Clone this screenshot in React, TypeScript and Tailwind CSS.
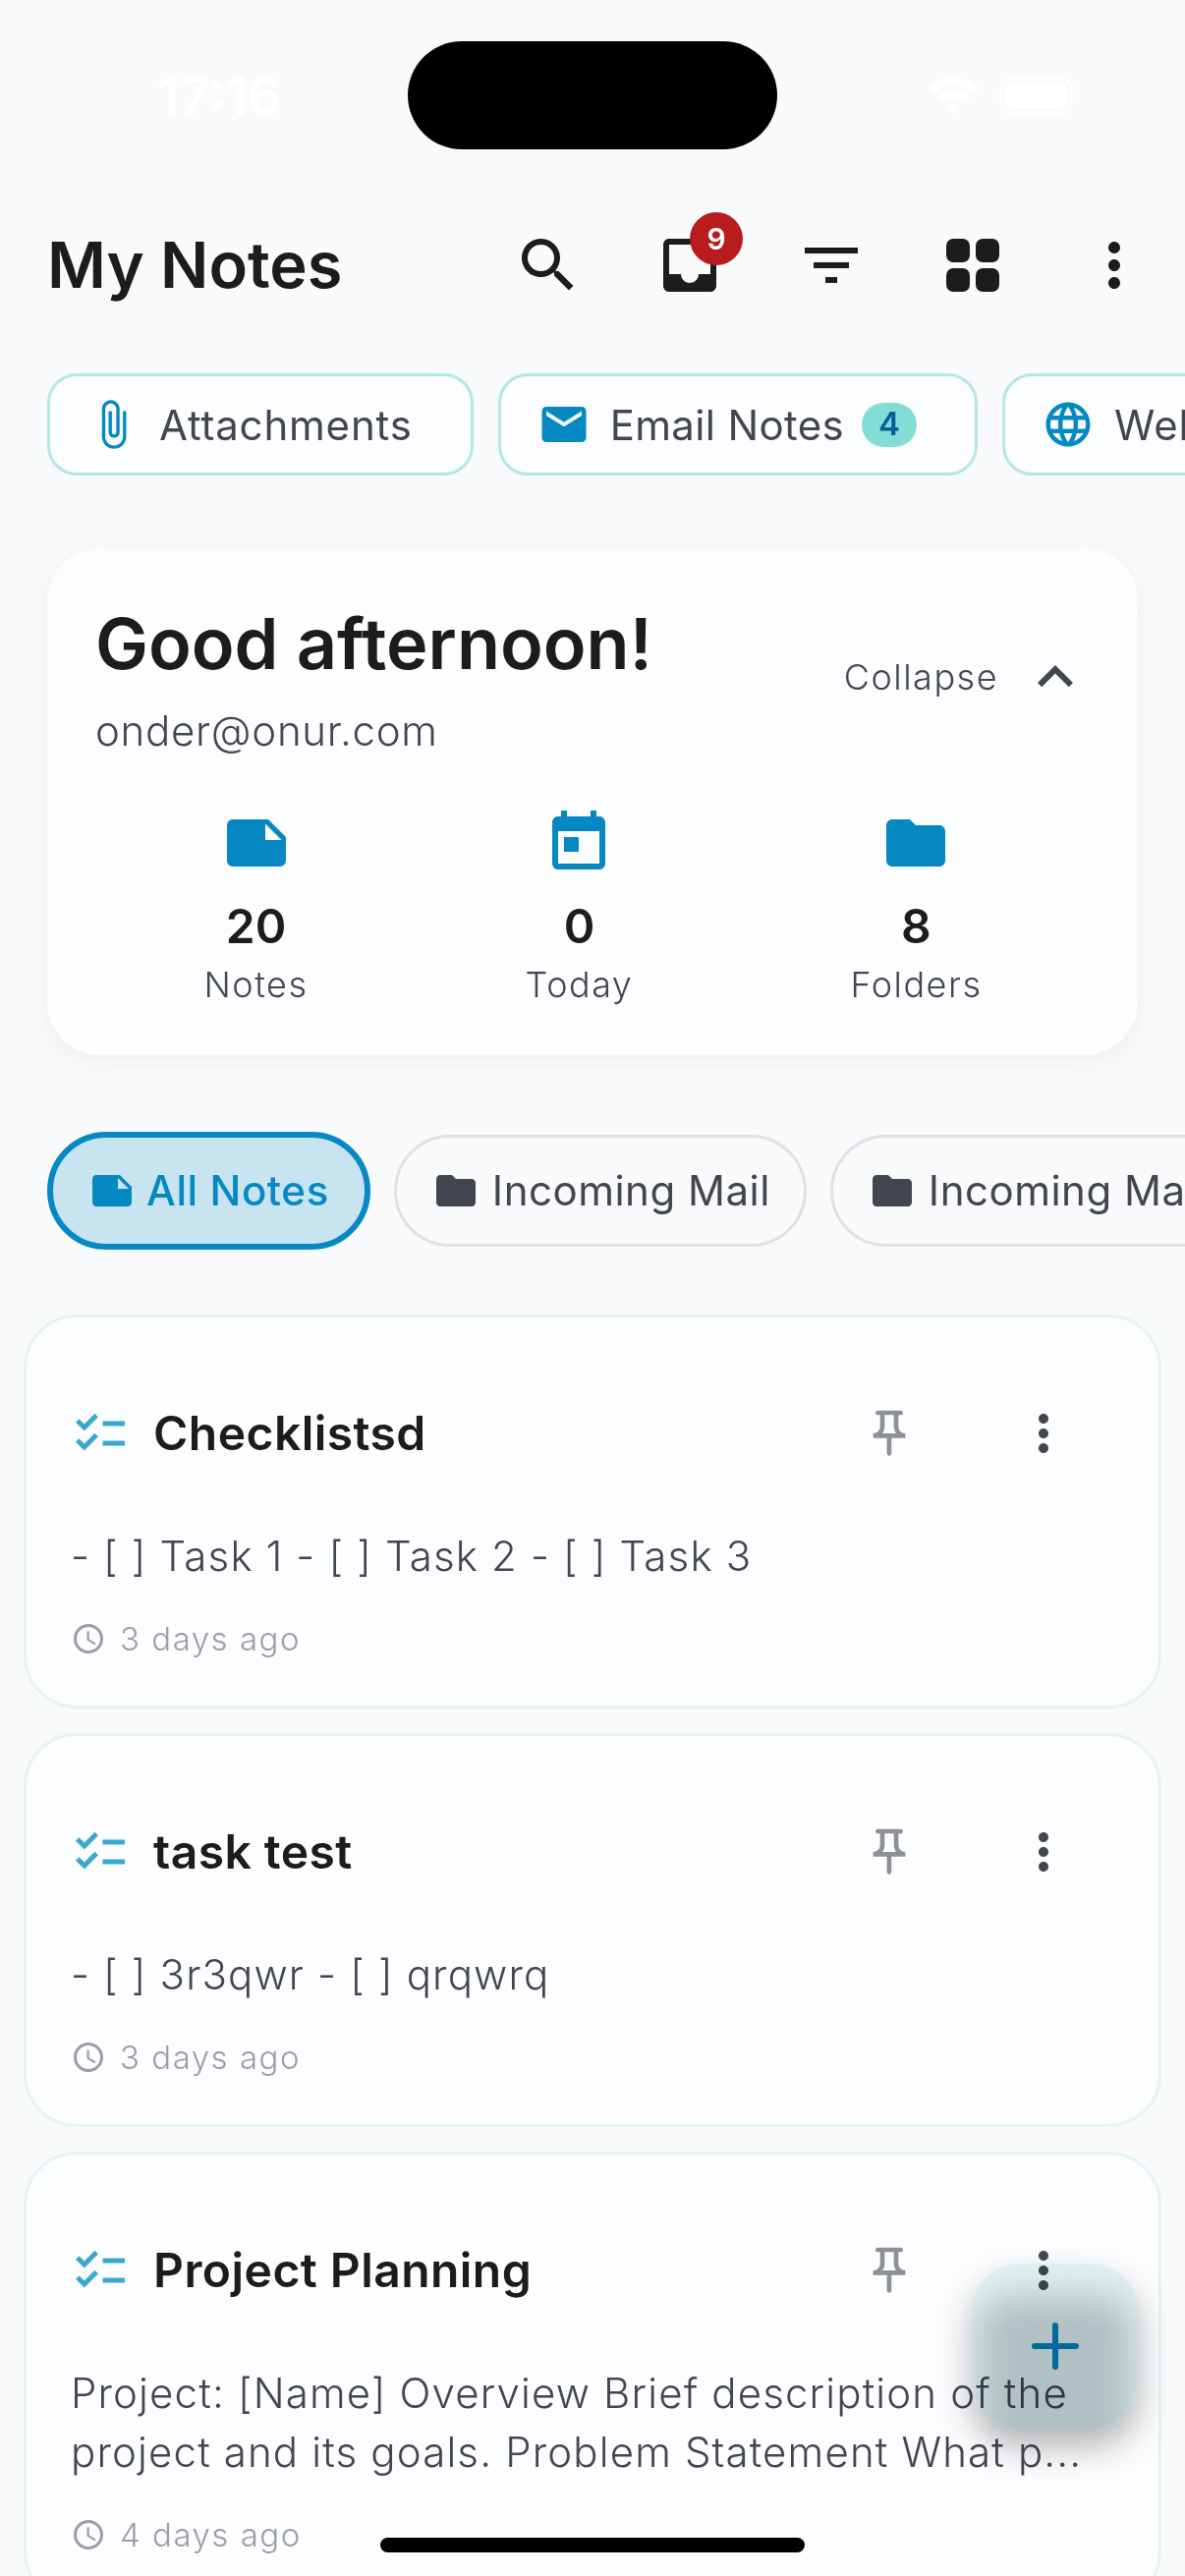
import type { ReactNode } from "react"

const icons = {
  search: "M15.5 14h-.79l-.28-.27C15.41 12.59 16 11.11 16 9.5 16 5.91 13.09 3 9.5 3S3 5.91 3 9.5 5.91 16 9.5 16c1.61 0 3.09-.59 4.23-1.57l.27.28v.79l5 4.99L20.49 19l-4.99-5zm-6 0C7.01 14 5 11.99 5 9.5S7.01 5 9.5 5 14 7.01 14 9.5 11.99 14 9.5 14z",
  inbox: "M19 3H4.99c-1.11 0-1.98.89-1.98 2L3 19c0 1.1.88 2 1.99 2H19c1.1 0 2-.9 2-2V5c0-1.11-.9-2-2-2zm0 12h-4c0 1.66-1.35 3-3 3s-3-1.34-3-3H4.99V5H19v10z",
  filter: "M10 18h4v-2h-4v2zM3 6v2h18V6H3zm3 7h12v-2H6v2z",
  dots: "M12 8c1.1 0 2-.9 2-2s-.9-2-2-2-2 .9-2 2 .9 2 2 2zm0 2c-1.1 0-2 .9-2 2s.9 2 2 2 2-.9 2-2-.9-2-2-2zm0 6c-1.1 0-2 .9-2 2s.9 2 2 2 2-.9 2-2-.9-2-2-2z",
  attach: "M16.5 6v11.5c0 2.21-1.79 4-4 4s-4-1.79-4-4V5c0-1.38 1.12-2.5 2.5-2.5s2.5 1.12 2.5 2.5v10.5c0 .55-.45 1-1 1s-1-.45-1-1V6H10v9.5c0 1.38 1.12 2.5 2.5 2.5s2.5-1.12 2.5-2.5V5c0-2.21-1.79-4-4-4S7 2.79 7 5v12.5c0 3.04 2.46 5.5 5.5 5.5s5.5-2.46 5.5-5.5V6h-1.5z",
  mail: "M20 4H4c-1.1 0-1.99.9-1.99 2L2 18c0 1.1.9 2 2 2h16c1.1 0 2-.9 2-2V6c0-1.1-.9-2-2-2zm0 4l-8 5-8-5V6l8 5 8-5v2z",
  globe: "M11.99 2C6.47 2 2 6.48 2 12s4.47 10 9.99 10C17.52 22 22 17.52 22 12S17.52 2 11.99 2zm6.93 6h-2.95c-.32-1.25-.78-2.45-1.38-3.56 1.84.63 3.37 1.91 4.33 3.56zM12 4.04c.83 1.2 1.48 2.53 1.91 3.96h-3.82c.43-1.43 1.08-2.76 1.91-3.96zM4.26 14C4.1 13.36 4 12.69 4 12s.1-1.36.26-2h3.38c-.08.66-.14 1.32-.14 2 0 .68.06 1.34.14 2H4.26zm.82 2h2.95c.32 1.25.78 2.45 1.38 3.56-1.84-.63-3.37-1.9-4.33-3.56zm2.95-8H5.08c.96-1.66 2.49-2.93 4.33-3.56C8.81 5.55 8.35 6.75 8.03 8zM12 19.96c-.83-1.2-1.48-2.53-1.91-3.96h3.82c-.43 1.43-1.08 2.76-1.91 3.96zM14.34 14H9.66c-.09-.66-.16-1.32-.16-2 0-.68.07-1.35.16-2h4.68c.09.65.16 1.32.16 2 0 .68-.07 1.34-.16 2zm.25 5.56c.6-1.11 1.06-2.31 1.38-3.56h2.95c-.96 1.65-2.49 2.93-4.33 3.56zM16.36 14c.08-.66.14-1.32.14-2 0-.68-.06-1.34-.14-2h3.38c.16.64.26 1.31.26 2s-.1 1.36-.26 2h-3.38z",
  chevron: "M12 8l-6 6 1.41 1.41L12 10.83l4.59 4.58L18 14z",
  note: "M22 10l-6-6H4c-1.1 0-2 .9-2 2v12.01c0 1.1.9 1.99 2 1.99l16-.01c1.1 0 2-.89 2-1.99v-8zm-7-4.5l5.5 5.5H15V5.5z",
  today: "M19 3h-1V1h-2v2H8V1H6v2H5c-1.11 0-1.99.9-1.99 2L3 19c0 1.1.89 2 2 2h14c1.1 0 2-.9 2-2V5c0-1.1-.9-2-2-2zm0 16H5V8h14v11zM7 10h5v5H7z",
  folder: "M10 4H4c-1.1 0-1.99.9-1.99 2L2 18c0 1.1.9 2 2 2h16c1.1 0 2-.9 2-2V8c0-1.1-.9-2-2-2h-8l-2-2z",
  checklist: "M22 7h-9v2h9V7zm0 8h-9v2h9v-2zM5.54 11L2 7.46l1.41-1.41 2.12 2.12 4.24-4.24 1.41 1.41L5.54 11zm0 8L2 15.46l1.41-1.41 2.12 2.12 4.24-4.24 1.41 1.41L5.54 19z",
  pin: "M14 4v5c0 1.12.37 2.16 1 3H9c.65-.86 1-1.9 1-3V4h4m3-2H7c-.55 0-1 .45-1 1s.45 1 1 1h1v5c0 1.66-1.34 3-3 3v2h5.97v7l1 1 1-1v-7H19v-2c-1.66 0-3-1.34-3-3V4h1c.55 0 1-.45 1-1s-.45-1-1-1z",
  clock: "M11.99 2C6.47 2 2 6.48 2 12s4.47 10 9.99 10C17.52 22 22 17.52 22 12S17.52 2 11.99 2zM12 20c-4.42 0-8-3.58-8-8s3.58-8 8-8 8 3.58 8 8-3.58 8-8 8zm.5-13H11v6l5.25 3.15.75-1.23-4.5-2.67z",
}

function Icon({ d, className }: { d: string; className: string }) {
  return (
    <svg viewBox="0 0 24 24" fill="currentColor" className={`shrink-0 ${className}`}>
      <path d={d} />
    </svg>
  )
}

function QuickChip({ icon, label, labelClass = "tracking-[0.8px]", children }: { icon: string; label: string; labelClass?: string; children?: ReactNode }) {
  return (
    <div className="flex h-[104px] shrink-0 items-center rounded-[30px] border-[3px] border-[#b2e8e5] bg-[#fcfdfe] pr-[59px] pl-[37px]">
      <Icon d={icon} className="h-[54px] w-[54px] text-[#0689c2]" />
      <span className={`mt-[2px] ml-[20px] text-[42px] leading-[60px] text-[#44464f] ${labelClass}`}>{label}</span>
      {children}
    </div>
  )
}

function Stat({ icon, value, label }: { icon: string; value: string; label: string }) {
  return (
    <div className="flex flex-col items-center">
      <Icon d={icon} className="h-[72px] w-[72px] text-[#0689c2]" />
      <div className="mt-[19px] text-[48px] leading-[60px] font-semibold text-[#1a1c1e]">{value}</div>
      <div className="mt-[4px] text-[36px] leading-[50px] font-light tracking-[1.5px] text-[#44464f]">{label}</div>
    </div>
  )
}

function FolderTab({ label }: { label: string }) {
  return (
    <div className="flex h-[114px] shrink-0 items-center rounded-full border-[3px] border-[#dfe1e4] pr-[34px] pl-[36px]">
      <Icon d={icons.folder} className="h-[48px] w-[48px] text-[#44464f]" />
      <span className="ml-[13px] text-[42px] leading-[60px] tracking-[0.5px] text-[#44464f]">{label}</span>
    </div>
  )
}

function NoteCard({ title, lines, time }: { title: string; lines: string[]; time: string }) {
  return (
    <div className="rounded-[54px] border-[3px] border-[#e4f5f3] bg-[#fcfdfe] pt-[82px] pr-[87px] pb-[50px] pl-[45px]">
      <div className="flex h-[72px] items-center">
        <Icon d={icons.checklist} className="h-[60px] w-[60px] text-[#3aa7d1]" />
        <div className="ml-[24px] flex-1 text-[48px] leading-[72px] font-semibold tracking-[0.45px] text-[#1a1c1e]">{title}</div>
        <Icon d={icons.pin} className="h-[56px] w-[56px] text-[#8e9097]" />
        <Icon d={icons.dots} className="ml-[99px] h-[60px] w-[60px] text-[#44464f]" />
      </div>
      <div className="mt-[59px] text-[42px] leading-[60px] tracking-[1.15px] font-light whitespace-nowrap text-[#44464f]">
        {lines.map((line) => (
          <div key={line}>{line}</div>
        ))}
      </div>
      <div className="mt-[36px] flex h-[36px] items-center text-[#9a9da3]">
        <Icon d={icons.clock} className="h-[36px] w-[36px]" />
        <span className="ml-[14px] text-[33px] leading-[36px] font-light tracking-[1.5px]">{time}</span>
      </div>
    </div>
  )
}

function App() {
  return (
    <div className="relative h-[2622px] w-[1206px] overflow-hidden bg-[#f9fafc] [font-family:Inter,sans-serif]">
      {/* status bar, white on the light page */}
      <div className="flex h-[234px] items-start justify-between pt-[66px] pr-[108px] pl-[160px] text-white">
        <span className="text-[54px] leading-[64px] font-semibold">17:16</span>
        <div className="mt-[12px] flex items-center gap-[21px]">
          <svg viewBox="0 0 51 38" className="h-[38px] w-[51px]" fill="none" stroke="currentColor" strokeWidth="8">
            <path d="M3 14C15 2 36 2 48 14" />
            <path d="M11 23C19 15 32 15 40 23" />
            <path d="M18 31l7.5 7 7.5-7c-4-4-11-4-15 0z" fill="currentColor" stroke="none" />
          </svg>
          <div className="flex items-center">
            <div className="h-[38px] w-[75px] rounded-[13px] border-[3px] border-white/60 p-[3px]">
              <div className="h-full w-full rounded-[8px] bg-white" />
            </div>
            <div className="ml-[3px] h-[12px] w-[3px] rounded-r-full bg-white/60" />
          </div>
        </div>
      </div>
      <div className="absolute top-[42px] left-[415px] h-[110px] w-[376px] rounded-[55px] bg-black" />

      <header className="flex h-[72px] items-center pr-[36px] pl-[48px]">
        <h1 className="flex-1 text-[65px] leading-[72px] font-semibold text-[#1a1c1e]">My Notes</h1>
        <div className="flex gap-[72px] text-[#1a1c1e]">
          <Icon d={icons.search} className="h-[72px] w-[72px]" />
          <div className="relative h-[72px] w-[72px]">
            <Icon d={icons.inbox} className="h-[72px] w-[72px]" />
            <div className="absolute top-[-18px] left-[36px] flex h-[54px] w-[54px] items-center justify-center rounded-full bg-[#b91c1c] text-[30px] font-semibold text-white">9</div>
          </div>
          <Icon d={icons.filter} className="h-[72px] w-[72px]" />
          <svg viewBox="0 0 24 24" fill="currentColor" className="h-[72px] w-[72px]">
            <rect x="3" y="3" width="8" height="8" rx="2.4" />
            <rect x="13" y="3" width="8" height="8" rx="2.4" />
            <rect x="3" y="13" width="8" height="8" rx="2.4" />
            <rect x="13" y="13" width="8" height="8" rx="2.4" />
          </svg>
          <Icon d={icons.dots} className="h-[72px] w-[72px]" />
        </div>
      </header>

      <div className="mt-[74px] flex gap-[25px] pl-[48px]">
        <QuickChip icon={icons.attach} label="Attachments" />
        <QuickChip icon={icons.mail} label="Email Notes" labelClass="tracking-[0.35px]">
          <span className="ml-[18px] flex h-[45px] w-[56px] items-center justify-center rounded-full bg-[#83dcd5] text-[33px] font-semibold text-[#065f96]">4</span>
        </QuickChip>
        <QuickChip icon={icons.globe} label="Web Clips" />
      </div>

      <section className="mx-[48px] mt-[74px] h-[516px] rounded-[54px] bg-[#fcfdfe] pt-[55px] pr-[48px] pl-[49px] shadow-[0_6px_24px_rgba(0,0,0,0.05)]">
        <div className="flex items-start justify-between">
          <div>
            <div className="text-[72px] leading-[84px] font-semibold text-[#1a1c1e]">Good afternoon!</div>
            <div className="mt-[17px] text-[42px] leading-[60px] font-light tracking-[0.7px] text-[#44464f]">onder@onur.com</div>
          </div>
          <div className="mt-[40px] flex items-center gap-[22px]">
            <span className="text-[36px] font-light tracking-[1.5px] text-[#44464f]">Collapse</span>
            <Icon d={icons.chevron} className="h-[72px] w-[72px] text-[#44464f]" />
          </div>
        </div>
        <div className="mt-[48px] flex justify-around">
          <Stat icon={icons.note} value="20" label="Notes" />
          <Stat icon={icons.today} value="0" label="Today" />
          <Stat icon={icons.folder} value="8" label="Folders" />
        </div>
      </section>

      <div className="mt-[78px] flex items-center gap-[24px] pl-[48px]">
        <div className="flex h-[120px] shrink-0 items-center rounded-full border-[6px] border-[#0689c2] bg-[#c8e4f1] px-[36px]">
          <Icon d={icons.note} className="h-[48px] w-[48px] text-[#0689c2]" />
          <span className="ml-[11px] text-[42px] leading-[60px] font-medium tracking-[0.6px] text-[#0689c2]">All Notes</span>
        </div>
        <FolderTab label="Incoming Mail" />
        <FolderTab label="Incoming Mail" />
      </div>

      <div className="mt-[66px] flex flex-col gap-[25px] px-[24px]">
        <NoteCard title="Checklistsd" lines={["- [ ] Task 1 - [ ] Task 2 - [ ] Task 3"]} time="3 days ago" />
        <NoteCard title="task test" lines={["- [ ] 3r3qwr - [ ] qrqwrq"]} time="3 days ago" />
        <NoteCard
          title="Project Planning"
          lines={["Project: [Name] Overview Brief description of the", "project and its goals. Problem Statement What p..."]}
          time="4 days ago"
        />
      </div>

      {/* add button: see-through, its own shadow darkens it from the inside */}
      <div className="absolute top-[2304px] left-[990px] flex h-[168px] w-[168px] items-center justify-center">
        <div className="absolute inset-0 overflow-hidden rounded-[48px] bg-[#e4f3f2] shadow-[0_18px_36px_rgba(0,0,0,0.3)] mix-blend-multiply">
          <div className="absolute top-[32px] right-[4px] bottom-[-50px] left-[4px] rounded-[36px] bg-[#b3c2c3] blur-[18px]" />
        </div>
        <svg viewBox="0 0 48 48" className="relative h-[48px] w-[48px]" stroke="#006a9c" strokeWidth="6" strokeLinecap="round">
          <path d="M24 3v42M3 24h42" />
        </svg>
      </div>

      <div className="absolute top-[2583px] left-[387px] h-[15px] w-[432px] rounded-full bg-black" />
    </div>
  )
}

export default App
